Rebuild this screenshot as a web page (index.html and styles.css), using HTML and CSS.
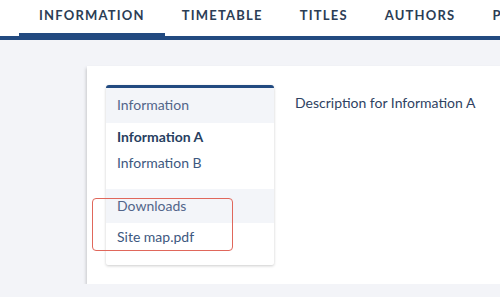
FILE: index.html
```html
<!DOCTYPE html>
<html lang="en">
<head>
    <meta charset="UTF-8">
    <title>Information</title>
    <link rel="stylesheet" href="styles.css">
</head>
<body>
    <nav class="tabs">
        <a class="tab active">Information</a>
        <a class="tab">Timetable</a>
        <a class="tab">Titles</a>
        <a class="tab">Authors</a>
        <a class="tab">Programme</a>
    </nav>

    <div class="page">
        <div class="card">
            <div class="sidebar">
                <div class="group">
                    <div class="group-title">Information</div>
                    <div class="item selected">Information A</div>
                    <div class="item">Information B</div>
                </div>
                <div class="group">
                    <div class="group-title">Downloads</div>
                    <div class="item">Site map.pdf</div>
                </div>
                <div class="highlight"></div>
            </div>
            <div class="content">Description for Information A</div>
        </div>
    </div>
</body>
</html>
```

FILE: styles.css
```css
body {
    margin: 0;
    font-family: 'Lato', sans-serif;
    background: #f3f4f8;
    overflow: hidden;
    color: #2e3f5c;
}
.tabs {
    display: flex;
    background: #fff;
    padding-left: 21px;
    border-bottom: 4px solid #224a80;
    white-space: nowrap;
}
.tab {
    display: block;
    height: 36px;
    box-sizing: border-box;
    padding: 0 20px;
    margin: 0 -1.5px;
    line-height: 30px;
    font-size: 13px;
    font-weight: 700;
    letter-spacing: 1.2px;
    text-transform: uppercase;
    color: #2b3d55;
    border-bottom: 3px solid transparent;
    flex-shrink: 0;
}
.tab:first-child {
    margin-left: -2px;
}
.tab.active {
    border-bottom-color: #224a80;
}
.page {
    padding: 26px 0 0 87px;
}
.card {
    display: flex;
    width: 470px;
    height: 218px;
    box-sizing: border-box;
    padding: 19px;
    background: #fff;
    box-shadow: -1px 2px 3px rgba(0, 0, 0, 0.18);
}
.sidebar {
    position: relative;
    width: 168px;
    flex-shrink: 0;
    border-top: 3px solid #224a80;
    border-radius: 3px 3px 2px 2px;
    box-shadow: 0 1px 3px rgba(0, 0, 0, 0.2);
    background: #fff;
}
.group {
    padding-bottom: 14px;
}
.group-title {
    height: 35px;
    line-height: 34px;
    padding: 0 11px;
    background: #f3f5f9;
    color: #52658a;
    font-size: 14px;
}
.group + .group .group-title {
    height: 34px;
}
.item {
    height: 26px;
    line-height: 28px;
    padding: 0 11px;
    font-size: 14px;
    color: #3d5880;
}
.item.selected {
    font-weight: 700;
    color: #27405f;
}
.highlight {
    position: absolute;
    left: -14px;
    top: 110px;
    width: 141px;
    height: 53px;
    box-sizing: border-box;
    border: 1.5px solid #e0675b;
    border-radius: 4px;
}
.content {
    padding: 8px 0 0 21px;
    font-size: 14px;
    line-height: 20px;
    color: #2f4262;
}
```
